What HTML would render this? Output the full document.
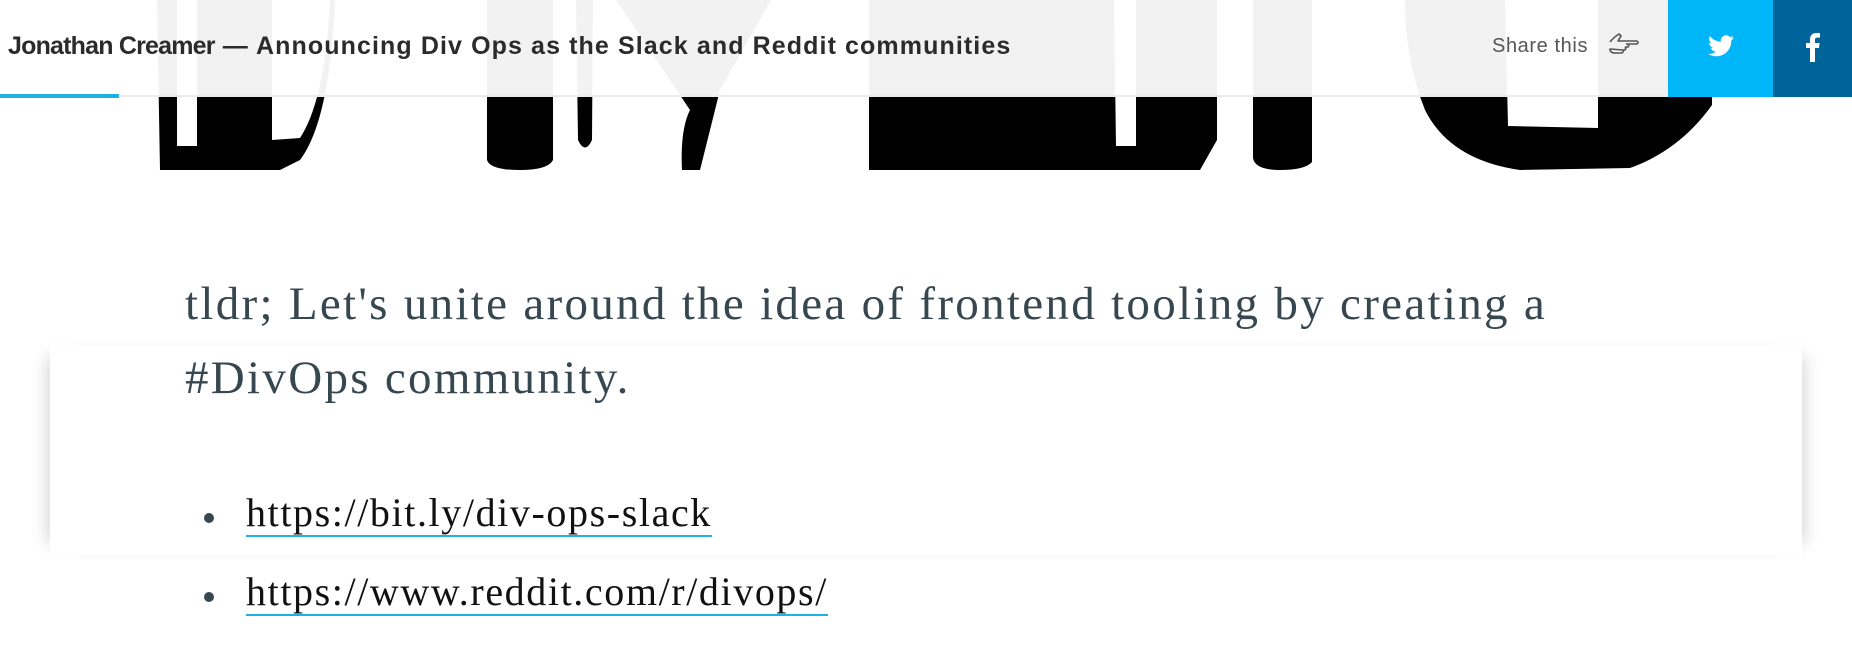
<!DOCTYPE html>
<html><head><meta charset="utf-8"><style>
html,body{margin:0;padding:0;background:#fff;width:1852px;height:661px;overflow:hidden;position:relative}
.hdr{position:absolute;left:0;top:0;width:1852px;height:97px;z-index:5}
.hdrbg{position:absolute;left:0;top:0;width:1668px;height:97px;background:rgba(255,255,255,0.95);border-bottom:2px solid #ececec;box-sizing:border-box}
.title{position:absolute;left:8px;top:32px;font:bold 25px "Liberation Sans",sans-serif;color:#2b2b2b;letter-spacing:1.1px;white-space:nowrap}
.title .a{letter-spacing:-0.8px}
.prog{position:absolute;left:0;top:94px;width:119px;height:4px;background:#1fb0e6}
.share{position:absolute;left:1492px;top:35px;font:20px "Liberation Sans",sans-serif;color:#555;letter-spacing:0.6px}
.tw{position:absolute;left:1668px;top:0;width:105px;height:97px;background:#00b6f8}
.fb{position:absolute;left:1773px;top:0;width:79px;height:97px;background:#006399}
.card{position:absolute;left:50px;top:345px;width:1752px;height:210px;background:#fff;box-shadow:-14px 0 16px -12px rgba(0,0,0,.18),14px 0 16px -12px rgba(0,0,0,.18)}
.p{position:absolute;left:185px;top:267px;width:1460px;font:47px/74px "Liberation Serif",serif;letter-spacing:2.3px;color:#37474f;z-index:2}
ul{position:absolute;left:210px;top:489px;margin:0;padding:0;list-style:none;z-index:2}
li{font:40px "Liberation Serif",serif;letter-spacing:1.6px;height:79px;position:relative;padding-left:36px}
li:before{content:"";position:absolute;left:-6px;top:24px;width:10px;height:10px;border-radius:50%;background:#37474f}
li a{color:#111;text-decoration:none;border-bottom:2px solid #1fb0e6}
</style></head><body>
<svg style="position:absolute;left:0;top:0" width="1852" height="180">
<g fill="#000">
<path d="M157 0 L335 0 Q330 120 300 160 L280 170 L160 170 Z"/>
<path d="M487 0 L553 0 L553 160 Q548 170 520 170 Q490 170 487 160 Z"/>
<path d="M576 0 L593 0 L592 140 Q585 155 578 140 Z"/>
<path d="M616 0 L771 0 L720 90 L700 170 L682 170 Q680 130 690 110 Z"/>
<path d="M869 0 L1040 0 L1040 170 L869 170 Z"/>
<path d="M1030 0 L1217 0 L1217 140 L1200 170 L1030 170 Z"/>
<path d="M1253 0 L1312 0 L1312 162 Q1305 170 1280 170 Q1255 170 1253 158 Z"/>
<path d="M1405 0 L1712 0 L1712 105 Q1680 150 1630 168 L1520 170 Q1450 160 1425 110 Q1405 60 1405 0 Z"/>
</g>
<g fill="#fff">
<path d="M177 0 L197 0 L197 146 L177 146 Z"/>
<path d="M272 0 L330 0 Q325 100 300 138 L272 140 Z"/>
<path d="M1114 0 L1136 0 L1136 146 L1116 146 Z"/>
<path d="M1505 0 L1598 0 L1598 128 L1508 126 Z"/>
</g>
</svg>
<div class="hdr">
<div class="hdrbg"></div>
<div class="title"><span class="a">Jonathan Creamer</span> — Announcing Div Ops as the Slack and Reddit communities</div>
<div class="prog"></div>
<div class="share">Share this</div>
<svg style="position:absolute;left:1607px;top:32px" width="34" height="28" viewBox="0 0 34 28" fill="none" stroke="#555" stroke-width="1.6" stroke-linejoin="round"><path d="M3 10 Q7 5 12 2 L14 4 L11 9 L30 9 Q32 10.5 30 12 L19 12 M19 12 L21 12 Q22.5 13.5 21 15 L18 15 M18 15 Q19.5 16.5 18 18 L16 18 M16 18 Q17 19.5 15 21 L8 21 Q3 21 3 17 Z"/></svg>
<div class="tw"><svg style="position:absolute;left:40px;top:35px" width="26" height="22" viewBox="0 0 24 20"><path fill="#fff" d="M24 2.4c-.9.4-1.8.6-2.8.8 1-.6 1.8-1.6 2.2-2.7-1 .6-2 1-3.1 1.2A4.9 4.9 0 0 0 11.9 6.1 14 14 0 0 1 1.7.9a4.9 4.9 0 0 0 1.5 6.6c-.8 0-1.6-.3-2.2-.6 0 2.4 1.7 4.4 3.9 4.8-.7.2-1.5.2-2.2.1.6 2 2.4 3.4 4.6 3.4A9.9 9.9 0 0 1 0 17.3 14 14 0 0 0 7.5 19.5c9.1 0 14-7.5 14-14v-.6c1-.7 1.8-1.6 2.5-2.5z"/></svg></div>
<div class="fb"><svg style="position:absolute;left:32px;top:32px" width="15" height="30" viewBox="0 0 15 30"><path fill="#fff" d="M10 30V16h4l.6-5H10V8c0-1.4.4-2.4 2.4-2.4H15V1.2C14.5 1.1 13 1 11.3 1 7.7 1 5 3.2 5 7.3V11H1v5h4v14z"/></svg></div>
</div>
<div class="card"></div>
<div class="p">tldr; Let's unite around the idea of frontend tooling by creating a #DivOps community.</div>
<ul>
<li><a>https://bit.ly/div-ops-slack</a></li>
<li><a>https://www.reddit.com/r/divops/</a></li>
</ul>
</body></html>
